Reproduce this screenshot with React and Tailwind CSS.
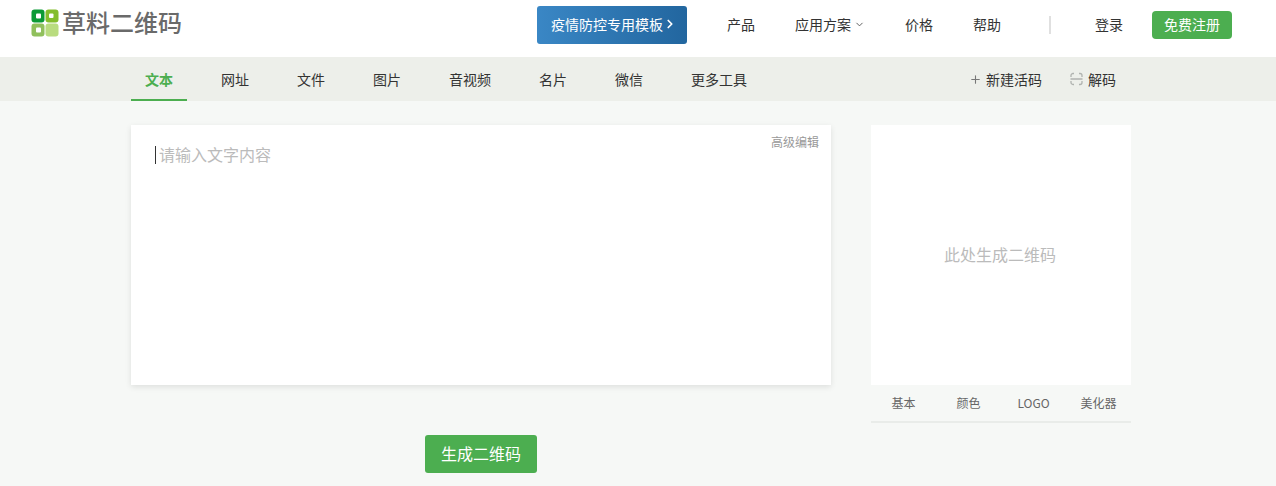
import { ChevronDown, ChevronRight, Plus } from 'lucide-react'

const tabs = ['文本', '网址', '文件', '图片', '音视频', '名片', '微信', '更多工具']
const styleTabs = ['基本', '颜色', 'LOGO', '美化器']

function Logo() {
  return (
    <svg width="28" height="28" viewBox="0 0 28 28" className="shrink-0">
      <rect x="0.5" y="0.5" width="13" height="13" rx="3" fill="#0b9a35" />
      <rect x="5" y="4.5" width="5" height="5" rx="1" fill="#fff" />
      <rect x="14.5" y="0.5" width="13" height="13" rx="3" fill="#84bd2c" />
      <rect x="18" y="4.5" width="4.5" height="4.5" rx="1" fill="#fff" />
      <rect x="0.5" y="14.5" width="13" height="13" rx="3" fill="#90c05c" />
      <rect x="5" y="18.5" width="5" height="5" rx="1" fill="#fff" />
      <rect x="14.5" y="14.5" width="13" height="13" rx="3" fill="#b9dc7f" />
    </svg>
  )
}

function ScanIcon() {
  return (
    <svg width="13" height="14" viewBox="0 0 13 14" fill="none" stroke="#b0b3b0" strokeWidth="1.3" className="shrink-0">
      <path d="M4 1.5H3A2 2 0 0 0 1 3.5V5M9 1.5h1a2 2 0 0 1 2 2V5M4 12.5H3a2 2 0 0 1-2-2V9M9 12.5h1a2 2 0 0 0 2-2V9M0.5 7h12" />
    </svg>
  )
}

export default function App() {
  return (
    <div className="h-screen overflow-hidden bg-[#f6f8f6] font-['Noto_Sans_CJK_SC','Liberation_Sans',sans-serif] text-sm text-[#333]">
      <header className="flex h-[57px] items-center bg-white pl-[31px] pr-[44px]">
        <div className="flex items-center gap-[3px] pb-[11px]">
          <Logo />
          <span className="pb-[2px] text-2xl font-medium leading-7 text-[#6a6a6a]">草料二维码</span>
        </div>
        <nav className="ml-auto flex items-center pb-[7px]">
          <a className="flex h-[38px] w-[150px] items-center justify-center rounded-[3px] bg-gradient-to-r from-[#3a87c5] to-[#22669f] pb-[2px] pl-[4px] text-white">
            疫情防控专用模板
            <ChevronRight className="h-3.5 w-3.5" strokeWidth={3} />
          </a>
          <a className="ml-10 pb-[2px]">产品</a>
          <a className="ml-10 flex w-[70px] items-center gap-[3px] pb-[2px]">
            应用方案
            <ChevronDown className="mt-[1px] h-[11px] w-[11px] text-[#555]" />
          </a>
          <a className="ml-10 pb-[2px]">价格</a>
          <a className="ml-10 pb-[2px]">帮助</a>
          <span className="ml-12 h-[18px] w-[2px] bg-[#e0e0e0]" />
          <a className="ml-[44px] pb-[2px]">登录</a>
          <a className="ml-[29px] flex h-7 w-20 items-center justify-center rounded-[4px] bg-[#4cae50] pb-[2px] text-white">免费注册</a>
        </nav>
      </header>

      <div className="h-11 bg-[#edefea]">
        <div className="ml-[131px] flex h-full w-[1000px] items-center">
          <div className="flex h-full gap-5">
            {tabs.map((tab, index) => (
              <a
                key={tab}
                className={`flex h-full items-center border-b-2 px-3.5 pt-[1px] ${
                  index === 0 ? 'border-[#4cae50] font-bold text-[#4cae50]' : 'border-transparent'
                }`}
              >
                {tab}
              </a>
            ))}
          </div>
          <div className="ml-auto flex items-center pr-[15px]">
            <a className="flex items-center gap-[4px]">
              <Plus className="h-[13px] w-[13px] text-[#777]" />
              新建活码
            </a>
            <a className="ml-7 flex items-center gap-[5px]">
              <ScanIcon />
              解码
            </a>
          </div>
        </div>
      </div>

      <main className="ml-[131px] mt-6 flex w-[1000px] gap-10">
        <div className="w-[700px]">
          <div className="relative h-[260px] bg-white pl-6 pt-[21px] shadow-[0_2px_6px_rgba(0,0,0,0.1)]">
            <div className="flex items-center text-base leading-[18px] text-[#bbb]">
              <span className="mr-[3px] h-[18px] w-px bg-[#333]" />
              <span className="-translate-y-px">请输入文字内容</span>
            </div>
            <a className="absolute right-3 top-2 text-xs leading-[18px] text-[#999]">高级编辑</a>
          </div>
          <div className="mt-[50px] flex justify-center">
            <button type="button" className="h-[38px] w-28 rounded-[3px] bg-[#4cae50] pb-[2px] text-base text-white">
              生成二维码
            </button>
          </div>
        </div>
        <div className="w-[260px]">
          <div className="flex h-[260px] items-center justify-center bg-white pb-[2px] pr-[2px] text-base text-[#bbb]">此处生成二维码</div>
          <div className="grid h-[38px] grid-cols-4 border-b-2 border-[#e9ece9] text-xs text-[#666]">
            {styleTabs.map((tab) => (
              <a key={tab} className="flex items-center justify-center">
                {tab}
              </a>
            ))}
          </div>
        </div>
      </main>
    </div>
  )
}
